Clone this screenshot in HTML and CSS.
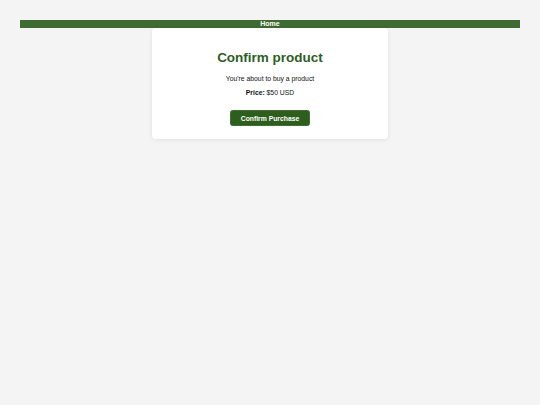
FILE: index.html
```html
<!DOCTYPE html>
<html lang="en">
<head>
<meta charset="utf-8">
<title>Confirm product</title>
<link rel="stylesheet" href="styles.css">
</head>
<body>
<nav class="topnav">
  <a class="topnav-link" href="#">Home</a>
</nav>
<main class="page">
  <section class="card">
    <h1 class="card-title">Confirm product</h1>
    <p class="card-text">You're about to buy a product</p>
    <p class="card-text"><strong>Price:</strong> $50 USD</p>
    <button class="btn-confirm" type="button">Confirm Purchase</button>
  </section>
</main>
</body>
</html>
```

FILE: styles.css
```css
html, body {
  margin: 0;
  padding: 0;
}
body {
  background: #f4f4f4;
  font-family: "Liberation Sans", Arial, sans-serif;
  font-size: 6.8px;
  color: #111;
  padding: 20px;
}
.topnav {
  background: #3d6b31;
  display: flex;
  justify-content: center;
  height: 8px;
  align-items: center;
}
.topnav-link {
  color: #fff;
  font-weight: bold;
  font-size: 7px;
  line-height: 8px;
  text-decoration: none;
}
.page {
  display: flex;
  justify-content: center;
}
.card {
  width: 236px;
  box-sizing: border-box;
  background: #fff;
  border-radius: 4px;
  box-shadow: 0 1px 4px rgba(0, 0, 0, 0.08);
  padding: 13px 13px 13px;
  display: flex;
  flex-direction: column;
  align-items: center;
  text-align: center;
}
.card-title {
  color: #2e5e1f;
  font-size: 13.5px;
  font-weight: bold;
  margin: 8.5px 0 6px;
  line-height: 16px;
}
.card-text {
  margin: 3px 0;
  line-height: 8px;
}
.btn-confirm {
  margin-top: 10.5px;
  background: #2d5e1d;
  color: #fff;
  border: 1px solid #3f6f33;
  border-radius: 2.5px;
  font-family: inherit;
  font-size: 6.8px;
  font-weight: bold;
  width: 80px;
  height: 16px;
  padding: 0;
}
```
